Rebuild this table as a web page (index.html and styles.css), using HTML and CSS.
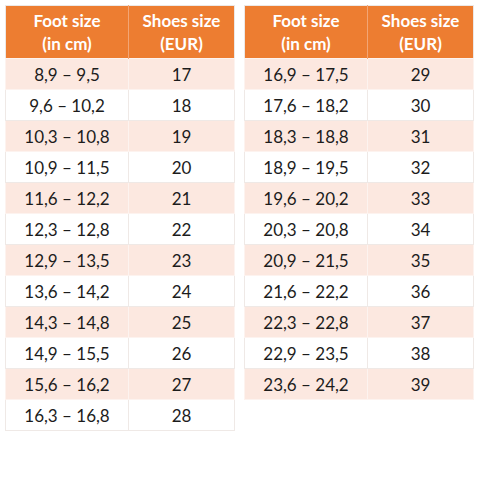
FILE: index.html
```html
<!DOCTYPE html>
<html>
<head>
<meta charset="utf-8">
<link rel="stylesheet" href="styles.css">
</head>
<body>
<div class="wrap">
  <table class="sizes">
    <thead>
      <tr><th>Foot size<br>(in cm)</th><th>Shoes size<br>(EUR)</th></tr>
    </thead>
    <tbody>
      <tr><td>8,9 – 9,5</td><td>17</td></tr>
      <tr><td>9,6 – 10,2</td><td>18</td></tr>
      <tr><td>10,3 – 10,8</td><td>19</td></tr>
      <tr><td>10,9 – 11,5</td><td>20</td></tr>
      <tr><td>11,6 – 12,2</td><td>21</td></tr>
      <tr><td>12,3 – 12,8</td><td>22</td></tr>
      <tr><td>12,9 – 13,5</td><td>23</td></tr>
      <tr><td>13,6 – 14,2</td><td>24</td></tr>
      <tr><td>14,3 – 14,8</td><td>25</td></tr>
      <tr><td>14,9 – 15,5</td><td>26</td></tr>
      <tr><td>15,6 – 16,2</td><td>27</td></tr>
      <tr><td>16,3 – 16,8</td><td>28</td></tr>
    </tbody>
  </table>
  <table class="sizes">
    <thead>
      <tr><th>Foot size<br>(in cm)</th><th>Shoes size<br>(EUR)</th></tr>
    </thead>
    <tbody>
      <tr><td>16,9 – 17,5</td><td>29</td></tr>
      <tr><td>17,6 – 18,2</td><td>30</td></tr>
      <tr><td>18,3 – 18,8</td><td>31</td></tr>
      <tr><td>18,9 – 19,5</td><td>32</td></tr>
      <tr><td>19,6 – 20,2</td><td>33</td></tr>
      <tr><td>20,3 – 20,8</td><td>34</td></tr>
      <tr><td>20,9 – 21,5</td><td>35</td></tr>
      <tr><td>21,6 – 22,2</td><td>36</td></tr>
      <tr><td>22,3 – 22,8</td><td>37</td></tr>
      <tr><td>22,9 – 23,5</td><td>38</td></tr>
      <tr><td>23,6 – 24,2</td><td>39</td></tr>
    </tbody>
  </table>
</div>
</body>
</html>
```
FILE: styles.css
```css
html, body {
  margin: 0;
  padding: 0;
  background: #ffffff;
}
body {
  font-family: "Lato", "Open Sans", "Liberation Sans", sans-serif;
  color: #1c1c1c;
}
.wrap {
  display: flex;
  align-items: flex-start;
  gap: 9px;
  padding: 5px 0 0 5px;
}
.sizes {
  width: 230px;
  border-collapse: collapse;
  table-layout: fixed;
  border: 1px solid #ece8e6;
}
.sizes th:first-child,
.sizes td:first-child {
  width: 123px;
}
.sizes th {
  background: #ed7d31;
  color: #ffffff;
  font-weight: 700;
  font-size: 17px;
  line-height: 23px;
  height: 53px;
  padding: 0;
  text-align: center;
  vertical-align: middle;
  border-left: 1px solid #f3a574;
  box-sizing: border-box;
}
.sizes th:first-child {
  border-left: none;
}
.sizes td {
  height: 31px;
  padding: 0;
  font-size: 17px;
  text-align: center;
  vertical-align: middle;
  border: 1px solid #efe9e6;
  box-sizing: border-box;
}
.sizes tbody tr:nth-child(odd) td {
  background: #fce8e0;
  border-color: #fdf3ef;
}
```
